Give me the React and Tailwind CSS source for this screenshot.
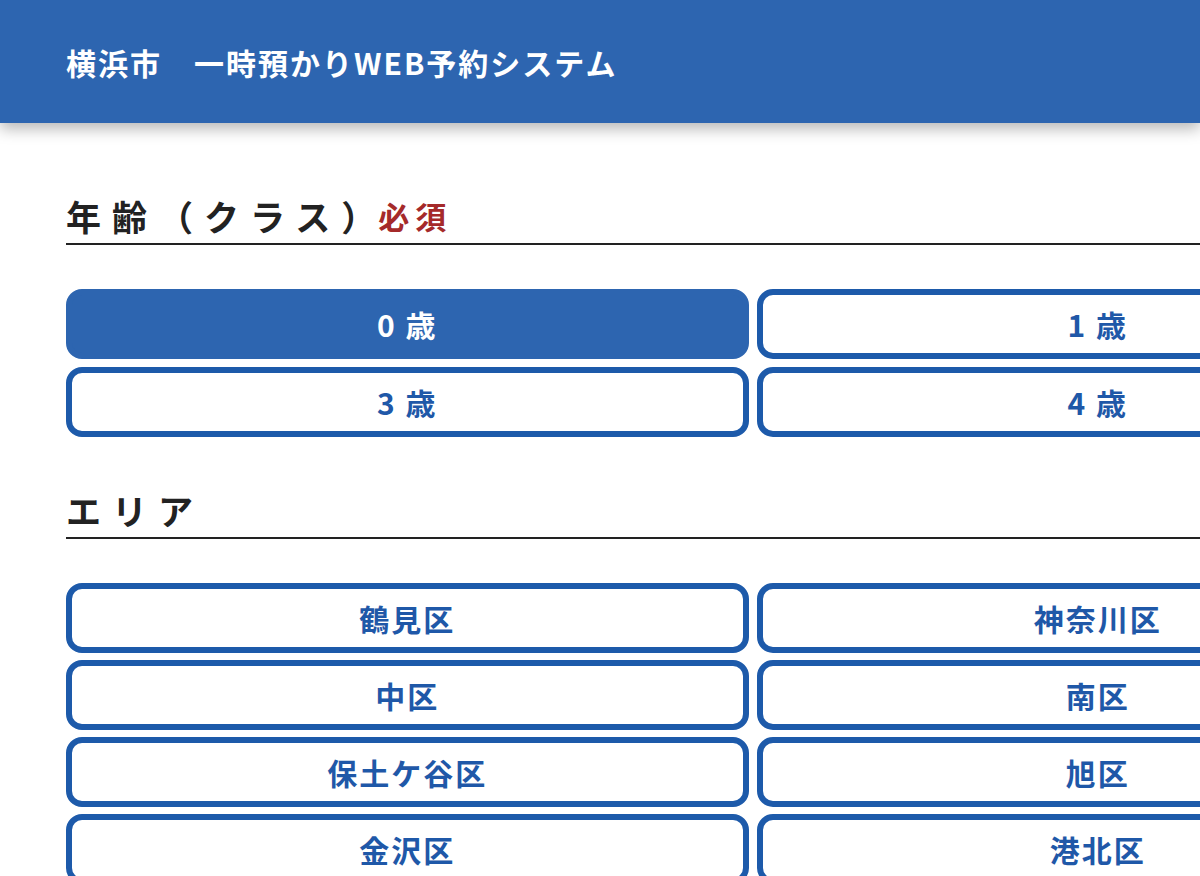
import React from "react";

const FONT = { fontFamily: '"Noto Sans CJK JP", "Noto Sans", sans-serif' };

function Heading({ children }) {
  return (
    <div className="flex items-end border-b-2 border-[#222222] pb-[10px]">
      {children}
    </div>
  );
}

function Choice({ label, selected }) {
  return (
    <button
      className={
        "h-[70px] rounded-[16px] border-[6px] flex items-center justify-center text-[30px] font-bold leading-none tracking-[2px] " +
        (selected ? "bg-[#2d65b0] text-white border-[#2d65b0]" : "bg-white text-[#1f58a8] border-[#1d5aaa]")
      }
    >
      {label}
    </button>
  );
}

export default function App() {
  const ages = [
    { label: "0 歳", selected: true },
    { label: "1 歳" },
    { label: "3 歳" },
    { label: "4 歳" },
  ];
  const areas = ["鶴見区", "神奈川区", "中区", "南区", "保土ケ谷区", "旭区", "金沢区", "港北区"];
  return (
    <div className="w-[1200px] h-[876px] overflow-hidden bg-white" style={FONT}>
      <header className="relative z-10 h-[123px] bg-[#2d65b0] flex items-center pl-[66px] shadow-[0_6px_14px_rgba(0,0,0,0.28)]">
        <h1 className="text-white text-[30px] font-bold leading-none tracking-[2px] whitespace-nowrap">
          横浜市　一時預かりWEB予約システム
        </h1>
      </header>
      <main className="w-[1505px] px-[66px] pt-[75px]">
        <Heading>
          <span className="text-[35px] leading-[35px] font-bold text-[#222222]">
            <span className="tracking-[11px]">年齢（クラス</span>
            <span>）</span>
          </span>
          <span className="text-[31px] leading-[35px] font-bold tracking-[6px] text-[#a52a2a] ml-[2px]">
            必須
          </span>
        </Heading>
        <div className="grid grid-cols-2 gap-x-[8px] gap-y-[8px] mt-[44px]">
          {ages.map((a) => (
            <Choice key={a.label} label={a.label} selected={a.selected} />
          ))}
        </div>
        <div className="mt-[55px]">
          <Heading>
            <span className="text-[35px] leading-[35px] font-bold tracking-[11px] text-[#222222]">
              エリア
            </span>
          </Heading>
        </div>
        <div className="grid grid-cols-2 gap-x-[8px] gap-y-[7px] mt-[44px]">
          {areas.map((a) => (
            <Choice key={a} label={a} />
          ))}
        </div>
      </main>
    </div>
  );
}
